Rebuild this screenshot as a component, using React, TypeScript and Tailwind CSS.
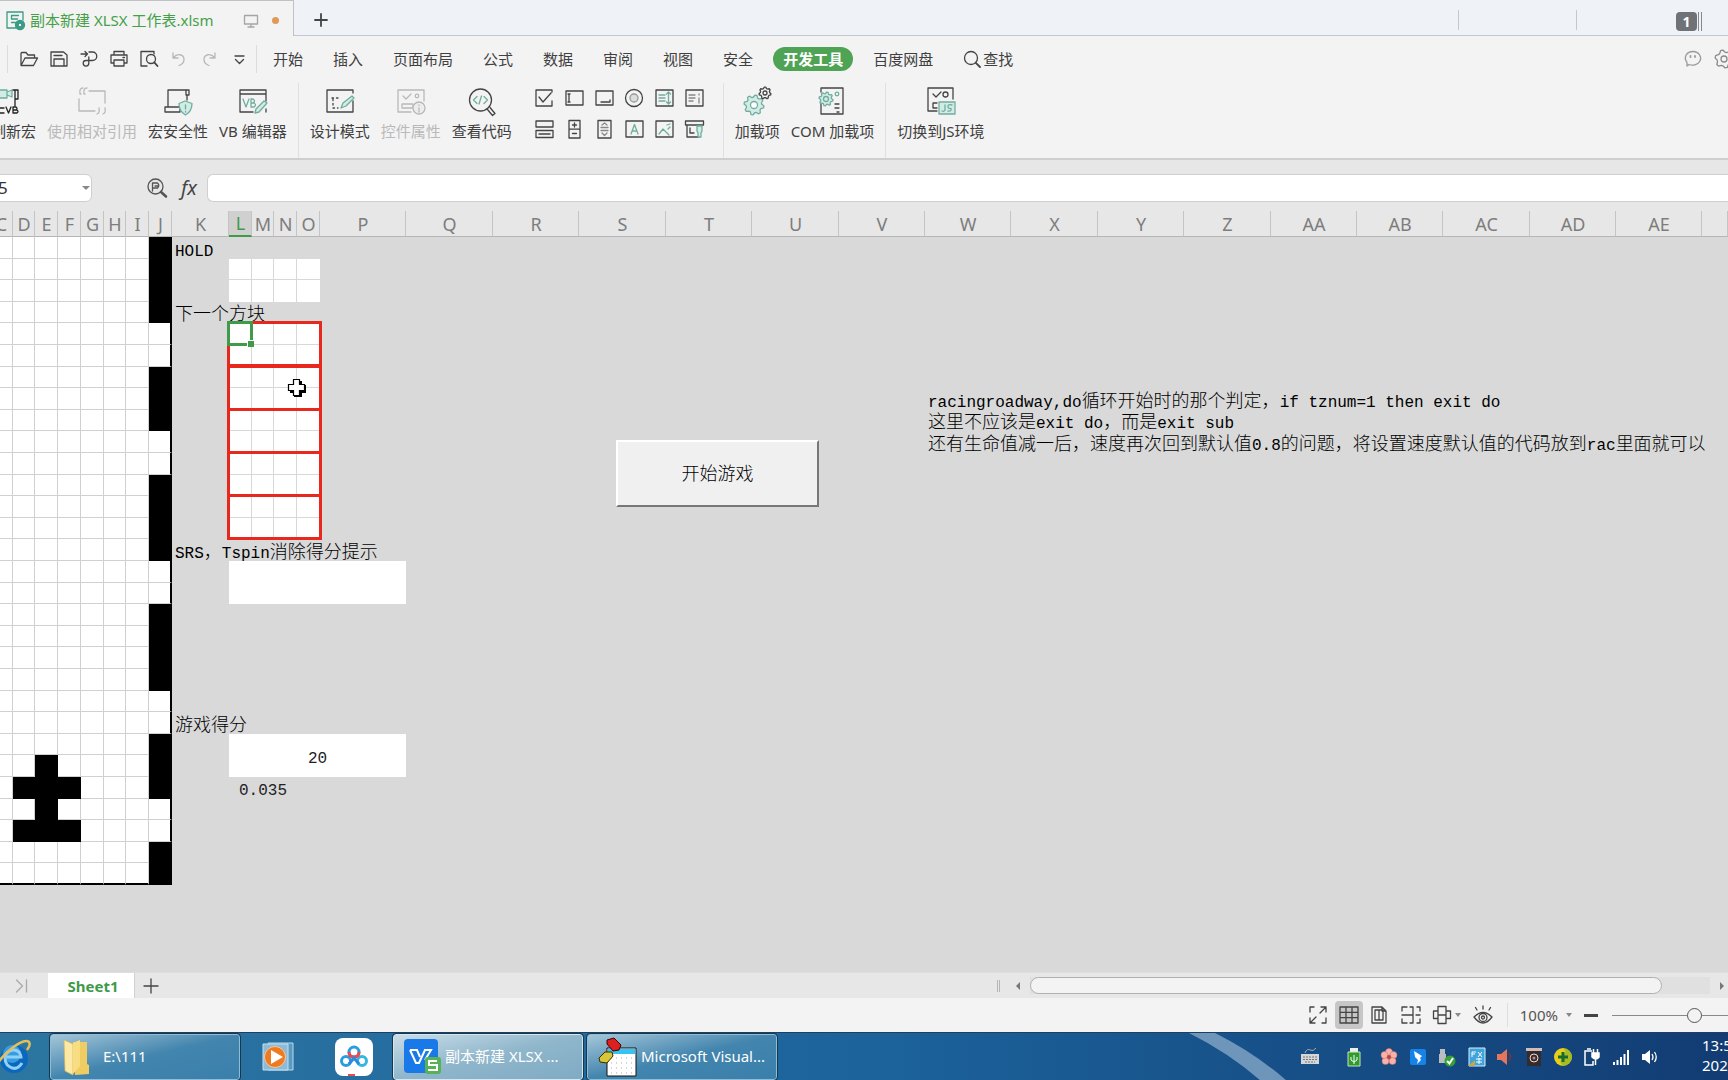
import React, { useState } from 'react';
import clsx from 'clsx';

const DARK = '#444';
const GREEN = '#6fae9f';
const TINT = '#d3ebe5';

interface IconProps {
  w?: number;
  h?: number;
  stroke?: string;
  children: React.ReactNode;
}

function Icon({ w = 18, h = 18, stroke = DARK, children }: IconProps) {
  return (
    <svg
      width={w}
      height={h}
      viewBox={`0 0 ${w} ${h}`}
      fill="none"
      stroke={stroke}
      strokeWidth="1.3"
      strokeLinecap="round"
      strokeLinejoin="round"
      className="shrink-0 overflow-visible"
    >
      {children}
    </svg>
  );
}

function gearPath(cx: number, cy: number, r: number, teeth: number) {
  const pts: string[] = [];
  for (let i = 0; i < teeth * 4; i++) {
    const a = ((i + 0.5) / (teeth * 4)) * Math.PI * 2;
    const rr = i % 4 < 2 ? r : r * 0.78;
    pts.push(`${(cx + Math.cos(a) * rr).toFixed(2)} ${(cy + Math.sin(a) * rr).toFixed(2)}`);
  }
  return `M${pts.join('L')}Z`;
}

/* ---------- title bar ---------- */

function TitleBar() {
  return (
    <div className="flex h-9 shrink-0 items-stretch bg-[#eff3f8]">
      <div className="flex w-[294px] shrink-0 items-center border-t border-r border-[#bfc1c4] bg-[#f3f3f3] pt-1 pl-1.5">
        <Icon w={20} h={20} stroke="#3a9c84">
          <path d="M10 17H1V1h16v8" />
          <path d="M12.500 4.500h-7v3.500h6M5.500 11.500h4" />
          <circle cx="14" cy="14" r="4.500" fill="#3a9c84" />
          <circle cx="14" cy="14" r="1.800" fill="#fff" />
        </Icon>
        <span className="ml-1 text-[15px] whitespace-nowrap text-[#45a049]">副本新建 XLSX 工作表.xlsm</span>
        <div className="mr-3.5 ml-auto flex items-center gap-3.5">
          <Icon w={14} h={14} stroke="#a5a5a5">
            <path d="M0.500 1.500h13v8.500h-13zM7 10v3M4 13h6" />
          </Icon>
          <span className="size-[7px] rounded-full bg-[#e0995a]" />
        </div>
      </div>
      <div className="flex flex-1 items-center border-b border-[#c3c7ce] pt-1 pl-[18px]">
        <button aria-label="新建标签" className="p-0.5">
          <Icon w={14} h={14}>
            <path d="M7 1v12M1 7h12" strokeWidth="1.8" />
          </Icon>
        </button>
        <div className="ml-auto flex items-center">
          <span className="mr-[117px] h-5 w-px bg-[#c4c8ce]" />
          <span className="mr-[99px] h-5 w-px bg-[#c4c8ce]" />
          <span className="mt-1 flex h-[19px] w-[21px] items-center justify-center rounded-sm bg-[#6f7276] text-sm font-bold text-white">
            1
          </span>
          <span className="mt-1 mr-[26px] ml-px h-[19px] w-1 border-x border-[#85888c]" />
        </div>
      </div>
    </div>
  );
}

/* ---------- menu row ---------- */

const MENUS = ['开始', '插入', '页面布局', '公式', '数据', '审阅', '视图', '安全', '开发工具', '百度网盘'];

const QUICK_TOOLS = [
  {
    label: '打开',
    icon: (
      <Icon>
        <path d="M1 15V3.500Q1 2.500 2 2.500h4l2 2.500h6.500v3M1 15.500h12.500L17.500 8H5z" />
      </Icon>
    ),
  },
  {
    label: '保存',
    icon: (
      <Icon>
        <path d="M1 2h12.500L17 5v11H1zM4 16V9h10v7M4 5.500h8" />
      </Icon>
    ),
  },
  {
    label: '输出',
    icon: (
      <Icon>
        <path d="M1 4h6.500M5 1.500L7.500 4 5 6.500M9 2h3.500a4 4 0 0 1 0 8.500H6a2.800 2.800 0 1 0 2.800 2.800V7" />
      </Icon>
    ),
  },
  {
    label: '打印',
    icon: (
      <Icon>
        <path d="M4 5V1.500h10V5M4 13H1V5h16v8h-3M4 10h10v6H4zM13 7.500h1.500" />
      </Icon>
    ),
  },
  {
    label: '打印预览',
    icon: (
      <Icon>
        <path d="M7 16H1V1.500h13V4" />
        <circle cx="11" cy="9" r="4.500" />
        <path d="M14.300 12.300L17.500 16" strokeWidth="1.800" />
      </Icon>
    ),
  },
  {
    label: '撤销',
    icon: (
      <Icon stroke="#b8b8b8">
        <path d="M3 3v5h5M3.500 7.500C7 3 14 4 14 9.500c0 3-2 5-5 6" />
      </Icon>
    ),
  },
  {
    label: '恢复',
    icon: (
      <Icon stroke="#b8b8b8">
        <path d="M15 3v5h-5M14.500 7.500C11 3 4 4 4 9.500c0 3 2 5 5 6" />
      </Icon>
    ),
  },
  {
    label: '更多',
    icon: (
      <Icon>
        <path d="M5 6h9M5.500 9.500l4 4 4-4" />
      </Icon>
    ),
  },
];

function MenuRow() {
  const [active, setActive] = useState('开发工具');

  return (
    <div className="flex h-[46px] shrink-0 items-center overflow-hidden whitespace-nowrap">
      <span className="ml-[7px] h-7 w-px shrink-0 bg-[#dcdcdc]" />
      <div className="ml-3 flex gap-3">
        {QUICK_TOOLS.map(tool => (
          <button key={tool.label} aria-label={tool.label}>
            {tool.icon}
          </button>
        ))}
      </div>
      <span className="ml-2 h-7 w-px shrink-0 bg-[#dcdcdc]" />
      <nav className="ml-1.5 flex gap-2.5">
        {MENUS.map(menu => (
          <button
            key={menu}
            onClick={() => setActive(menu)}
            className={clsx(
              'h-6 rounded-full px-2.5 text-[15px] leading-6',
              active === menu ? 'bg-[#4ea354] font-bold text-white' : 'text-[#404040]'
            )}
          >
            {menu}
          </button>
        ))}
      </nav>
      <button className="ml-5 flex items-center gap-0.5 text-[15px] text-[#404040]">
        <Icon>
          <circle cx="8" cy="8" r="6.500" />
          <path d="M12.800 12.800L17 17" strokeWidth="1.800" />
        </Icon>
        查找
      </button>
      <div className="-mr-1.5 ml-auto flex items-center gap-3">
        <button aria-label="反馈">
          <Icon stroke="#9a9a9a">
            <path d="M3 16v-3.500C-1 7 3 1.500 9 1.500s9 5.500 7 9.500-8 5-11 3.500z" />
            <path d="M6.500 6v1M11 6v1" strokeWidth="1.800" />
          </Icon>
        </button>
        <button aria-label="设置">
          <Icon w={20} h={20} stroke="#8a8a8a">
            <path d={gearPath(10, 10, 9, 6)} />
            <circle cx="10" cy="10" r="3" />
          </Icon>
        </button>
      </div>
    </div>
  );
}

/* ---------- ribbon ---------- */

function RibbonButton({ label, disabled, children }: { label: string; disabled?: boolean; children: React.ReactNode }) {
  return (
    <button
      disabled={disabled}
      className={clsx(
        'flex shrink-0 flex-col items-center gap-1 text-[15px] leading-6',
        disabled ? 'text-[#b9b9b9]' : 'text-[#404040]'
      )}
    >
      {children}
      {label}
    </button>
  );
}

const FORM_CONTROLS = [
  <path key="check" d="M17 12v5H1V1h16v2M4 8l4 5 8-9" />,
  <path key="edit" d="M1 2h17v14H1zM4 5v8M3 5h2M3 13h2" />,
  <path key="button" d="M1 2h17v14H1zM6 13h9v-2" />,
  <g key="radio">
    <circle cx="9" cy="9" r="8.500" />
    <circle cx="9" cy="9" r="4" fill="#d8dedd" stroke="#999" />
  </g>,
  <g key="list">
    <path d="M1 1h17v16H1z" />
    <path d="M4 6h6M4 9h6M4 12h6M13.500 3v12M11.500 5l2-2 2 2M11.500 13l2 2 2-2" stroke={GREEN} />
  </g>,
  <g key="combo">
    <path d="M1 1h17v16H1z" />
    <path d="M4 6h6M4 9h6M4 12h4M14 5v1M14 9v5" stroke="#888" />
  </g>,
  <path key="toggle" d="M1 1h17v6H1zM1 10.500h17v7H1zM4 14h11" />,
  <path key="spin" d="M4 0.500h11v17.500H4zM4 9.200h11M9.500 3v4M7.500 5h4M7.500 13.500h4" />,
  <g key="scroll">
    <path d="M3 0.500h13v17.500H3z" />
    <path d="M7 5l2.500-2L12 5M6 7.500h7M6 10.500h7M7 13l2.500 2.500L12 13" stroke="#888" />
  </g>,
  <g key="label">
    <path d="M1 1h17v16H1z" />
    <path d="M6 14L9.500 4.500 13 14M7 11h5" stroke={GREEN} />
  </g>,
  <g key="image">
    <path d="M1 1h17v16H1z" />
    <path d="M4 14l4-5 6 6M12 5l3-1M13 9l2-2" stroke={GREEN} />
  </g>,
  <g key="more">
    <path d="M0.500 1h18v4h-18zM2 5v12h12M5 8v5h4" />
    <path d="M12 6v5l1 2v4h3v-4l1-2V6z" fill={TINT} stroke={GREEN} />
  </g>,
];

function Separator() {
  return <span className="-mt-1 h-20 w-px shrink-0 bg-[#e0e0e0]" />;
}

function Ribbon() {
  return (
    <div className="h-[78px] shrink-0 overflow-hidden border-b-2 border-[#cfcfcf] pt-[5px]">
      <div className="-ml-6 flex items-start gap-[11px] whitespace-nowrap">
        <RibbonButton label="录制新宏">
          <Icon w={28} h={28}>
            <path d="M0 3h15v8H0zM15 5l5-2v7l-5-2" fill={TINT} stroke={GREEN} />
            <path d="M21 3h5v9h-3V3M23 12v7M0 19v7h12M5 21h7" stroke="#222" />
            <path d="M14 20l2.500 6 2.500-6M21 20v6h4q2-1.500 0-3h-4 3q2-1.500 0-3z" stroke="#222" />
          </Icon>
        </RibbonButton>
        <RibbonButton label="使用相对引用" disabled>
          <Icon w={28} h={28} stroke="#b9b9b9">
            <path d="M11 4h16v12M1 12v12h16M5 1Q1 1 2 7h1M9 1Q5 1 6 7h1M19 27q3-1 2-6M25 27q3-1 2-6" />
          </Icon>
        </RibbonButton>
        <RibbonButton label="宏安全性">
          <Icon w={28} h={28}>
            <path d="M4 20V3h21v5h-3V3M1 20h15v5H1zM23 8v5" />
            <path d="M21 14l7 2.500c0 6-2 9-6.500 11.500C17 25.500 15 22 15 16.500z" fill={TINT} stroke={GREEN} />
            <path d="M21.500 18v4M21.500 24.500v0.500" stroke={GREEN} />
          </Icon>
        </RibbonButton>
        <RibbonButton label="VB 编辑器">
          <Icon w={28} h={28}>
            <path d="M14 25H1V3h26v11M1 7h26M27 22v3" />
            <path d="M4 12l3 8 3-8M12 12v8h3q3-2 0-4h-3 2q3-2 0-4z" stroke={GREEN} />
            <path d="M16 26l1-4 8-8 3 2-8 9z" fill={TINT} stroke={GREEN} />
          </Icon>
        </RibbonButton>
        <Separator />
        <RibbonButton label="设计模式">
          <Icon w={28} h={28}>
            <path d="M27 14v11H1V3h26v3" />
            <path d="M6 11h9M7 12v9h5" strokeDasharray="1.500 3" />
            <path d="M15 21l2-5 9-7 2 2-8 8z" fill={TINT} stroke={GREEN} />
          </Icon>
        </RibbonButton>
        <RibbonButton label="控件属性" disabled>
          <Icon w={28} h={28} stroke="#b9b9b9">
            <path d="M14 25H1V3h26v11M6 9l3 3 5-5M5 17h11v4H5z" />
            <circle cx="20" cy="9" r="1.800" />
            <circle cx="22" cy="21" r="6" fill="#ededed" />
            <path d="M22 18v0.500M22 21v4" />
          </Icon>
        </RibbonButton>
        <RibbonButton label="查看代码">
          <Icon w={28} h={28}>
            <circle cx="12.500" cy="13" r="11" />
            <path d="M19.500 22.500l5 6 2.500-2-5-6" />
            <path d="M9 9.500L5.500 13 9 16.500M16 9.500l3.500 3.500-3.500 3.500M13.500 9l-2.500 8" stroke={GREEN} />
          </Icon>
        </RibbonButton>
        <div className="mt-0.5 mr-2 ml-3 grid grid-cols-6 gap-x-[11px] gap-y-3">
          {FORM_CONTROLS.map((shape, i) => (
            <button key={i} aria-label={`控件 ${i + 1}`}>
              <Icon w={19} h={19}>{shape}</Icon>
            </button>
          ))}
        </div>
        <Separator />
        <RibbonButton label="加载项">
          <Icon w={28} h={28}>
            <path d={gearPath(11, 18, 10, 8)} fill={TINT} stroke={GREEN} />
            <circle cx="11" cy="18" r="3.500" fill="#fff" stroke={GREEN} />
            <path d={gearPath(22, 6, 6, 7)} />
            <circle cx="22" cy="6" r="2" />
          </Icon>
        </RibbonButton>
        <RibbonButton label="COM 加载项">
          <Icon w={28} h={28}>
            <path d="M3 17v10h22V1H3v4M17 17h4M17 21h4M19 25h2" />
            <path d={gearPath(8, 12, 7, 8)} fill={TINT} stroke={GREEN} />
            <circle cx="8" cy="12" r="2.500" stroke={GREEN} />
            <circle cx="19" cy="7" r="1.800" stroke={GREEN} />
          </Icon>
        </RibbonButton>
        <Separator />
        <RibbonButton label="切换到JS环境">
          <Icon w={28} h={28}>
            <path d="M10 24H1V1h25v11M6 7l3 3 5-5M10 16H6v5h4" />
            <circle cx="18.500" cy="7.500" r="2.500" />
            <path d="M12 15h16v12H12z" fill={TINT} stroke={GREEN} />
            <path d="M18 18v5q-1 2-3 1M25 18q-4-1-4 1.500t3 2q1 3-3 2.500" stroke={GREEN} />
          </Icon>
        </RibbonButton>
      </div>
    </div>
  );
}

/* ---------- formula bar ---------- */

function FormulaBar() {
  return (
    <div className="flex h-[51px] shrink-0 items-center overflow-hidden bg-[#e7e7e7] pt-1">
      <div className="relative -ml-5 shrink-0">
        <input
          aria-label="名称框"
          defaultValue="L5"
          className="block h-7 w-[112px] rounded-md border border-[#cfcfcf] bg-white pl-2 text-[17px] text-[#333]"
        />
        <span className="absolute top-3 right-0.5 border-x-[4px] border-t-[4px] border-x-transparent border-t-[#888]" />
      </div>
      <button aria-label="浏览公式" className="ml-[55px]">
        <Icon w={20} h={20} stroke="#555">
          <circle cx="8.500" cy="8.500" r="7.500" />
          <path d="M5.500 13V5h5q2.500 2.500 0 5h-5M8 8h3" />
          <path d="M14 14l5 4.500" strokeWidth="2.600" />
        </Icon>
      </button>
      <button className="ml-3 w-5 text-xl leading-6 text-[#444] italic">fx</button>
      <input
        aria-label="编辑栏"
        className="ml-2 h-7 min-w-0 flex-1 rounded-l-md border border-r-0 border-[#cfcfcf] bg-white px-2"
      />
    </div>
  );
}

/* ---------- sheet ---------- */

// the last column takes whatever is left of the window
const COLUMNS: { name: string; width?: number }[] = [
  { name: 'C', width: 13 },
  { name: 'D', width: 22 },
  { name: 'E', width: 23 },
  { name: 'F', width: 23 },
  { name: 'G', width: 23 },
  { name: 'H', width: 22 },
  { name: 'I', width: 23 },
  { name: 'J', width: 23 },
  { name: 'K', width: 57 },
  { name: 'L', width: 23 },
  { name: 'M', width: 22 },
  { name: 'N', width: 23 },
  { name: 'O', width: 23 },
  { name: 'P', width: 86 },
  { name: 'Q', width: 87 },
  { name: 'R', width: 86 },
  { name: 'S', width: 87 },
  { name: 'T', width: 86 },
  { name: 'U', width: 87 },
  { name: 'V', width: 86 },
  { name: 'W', width: 86 },
  { name: 'X', width: 87 },
  { name: 'Y', width: 86 },
  { name: 'Z', width: 87 },
  { name: 'AA', width: 86 },
  { name: 'AB', width: 86 },
  { name: 'AC', width: 87 },
  { name: 'AD', width: 86 },
  { name: 'AE', width: 86 },
  { name: '' },
];

const ROW_HEIGHTS = [22, 21, 22, 21, 22];
const ROW_COUNT = 34;
const BOARD_ROWS = 30;

const TEXTS: Record<string, string> = {
  K1: 'HOLD',
  K4: '下一个方块',
  K15: 'SRS，Tspin消除得分提示',
  K23: '游戏得分',
  L24: '20',
  L26: '0.035',
  W8: 'racingroadway,do循环开始时的那个判定，if tznum=1 then exit do',
  W9: '这里不应该是exit do，而是exit sub',
  W10: '还有生命值减一后，速度再次回到默认值0.8的问题，将设置速度默认值的代码放到rac里面就可以',
};

const MERGES: Record<string, { cols: number; rows: number; fill: boolean }> = {
  L16: { cols: 5, rows: 2, fill: true },
  L24: { cols: 5, rows: 2, fill: true },
  L26: { cols: 3, rows: 1, fill: false },
};

const WALL_ROWS = [1, 2, 3, 4, 7, 8, 9, 12, 13, 14, 15, 18, 19, 20, 21, 24, 25, 26, 29, 30];
const CAR = ['E25', 'D26', 'E26', 'F26', 'E27', 'D28', 'E28', 'F28'];

function isCovered(col: number, row: number) {
  return Object.entries(MERGES).some(([key, m]) => {
    const c = COLUMNS.findIndex(x => x.name === key[0]);
    const r = parseInt(key.slice(1));
    return col >= c && col < c + m.cols && row >= r && row < r + m.rows && !(col === c && row === r);
  });
}

function cellClass(name: string, col: number, row: number) {
  const key = name + row;
  if (col <= 7 && row <= BOARD_ROWS) {
    const black = (name === 'J' && WALL_ROWS.includes(row)) || CAR.includes(key);
    return clsx(
      black ? 'border-black bg-black' : 'border-[#d0d0d0] bg-white',
      name === 'J' ? 'border-r-2 border-r-black' : 'border-r',
      row === BOARD_ROWS ? 'border-b-2 border-b-black' : 'border-b'
    );
  }
  if (col >= 9 && col <= 12) {
    if (row === 2 || row === 3) {
      return clsx('border-[#d8d8d8] bg-white', name !== 'O' && 'border-r', row === 2 && 'border-b');
    }
    if (row >= 5 && row <= 14) return 'border-r border-b border-[#d8d8d8] bg-white';
  }
  return '';
}

// latin runs of the cell font are narrower than the ideographs
function CellText({ text }: { text: string }) {
  return (
    <>
      {text.split(/([\x20-\x7e]+)/).map((part, i) =>
        i % 2 === 1 ? (
          <span key={i} className="text-base leading-none font-normal">
            {part}
          </span>
        ) : (
          part
        )
      )}
    </>
  );
}

function Sheet() {
  return (
    <div className="relative min-h-0 flex-1 overflow-hidden bg-[#d9d9d9]">
      <table className="w-full table-fixed border-separate border-spacing-0">
        <colgroup>
          {COLUMNS.map(c => (
            <col key={c.name} style={{ width: c.width }} />
          ))}
        </colgroup>
        <thead>
          <tr className="h-[26px]">
            {COLUMNS.map(c => (
              <th
                key={c.name}
                className={clsx(
                  'border-r border-r-[#c4c4c4] p-0 text-center text-lg leading-6 font-normal',
                  c.name === 'L'
                    ? 'border-b-2 border-b-[#3f9a4a] bg-[#d0d0d0] text-[#3f9a4a]'
                    : 'border-b border-b-[#b5b5b5] bg-[#e7e7e7] text-[#7d7d7d]'
                )}
              >
                <span className={clsx('flex justify-center pl-px', c.name === 'C' && '-ml-2.5')}>{c.name}</span>
              </th>
            ))}
          </tr>
        </thead>
        <tbody className="font-['Liberation_Mono','Noto_Sans_CJK_SC',monospace] text-lg leading-6 font-light text-black">
          {Array.from({ length: ROW_COUNT }, (_, i) => i + 1).map(row => (
            <tr key={row} style={{ height: ROW_HEIGHTS[(row - 1) % 5] }}>
              {COLUMNS.map((c, col) => {
                if (isCovered(col, row)) return null;
                const key = c.name + row;
                const merge = MERGES[key];
                return (
                  <td
                    key={key}
                    colSpan={merge?.cols}
                    rowSpan={merge?.rows}
                    className={clsx(
                      'relative p-0 whitespace-nowrap',
                      merge ? 'text-center align-middle text-[#222]' : 'align-bottom',
                      merge?.fill && 'bg-white',
                      cellClass(c.name, col, row)
                    )}
                  >
                    {TEXTS[key] && (
                      <div className={clsx('h-5', !merge && 'pl-[3px]')}>
                        <CellText text={TEXTS[key]} />
                      </div>
                    )}
                    {c.name === 'L' && row >= 5 && row <= 13 && row % 2 === 1 && (
                      <span className="absolute -top-0.5 -left-0.5 z-10 h-[46px] w-[95px] border-[3px] border-[#e8281c]" />
                    )}
                    {key === 'L5' && (
                      <span className="absolute -top-0.5 -left-0.5 z-20 h-[25px] w-[26px] border-[3px] border-[#3f9a4a]">
                        <span className="absolute -right-1 -bottom-1 size-[7px] border-t border-l border-white bg-[#3f9a4a]" />
                      </span>
                    )}
                  </td>
                );
              })}
            </tr>
          ))}
        </tbody>
      </table>

      {/* form button floating over the cells */}
      <button className="absolute top-[229px] left-[616px] h-[67px] w-[203px] border-2 border-t-white border-r-[#777] border-b-[#777] border-l-white bg-[#f0f0f0] pb-0.5 text-lg font-light text-black">
        开始游戏
      </button>

      <svg className="absolute top-[167px] left-[287px] z-30" width="20" height="20" viewBox="0 0 20 20">
        <path d="M8 3h7v4h4v8h-4v4H7v-4H3V8h4z" fill="#000" />
        <path d="M6.500 1.500h6v5h5v6h-5v5h-6v-5h-5v-6h5z" fill="#fff" stroke="#000" strokeWidth="1.200" />
      </svg>
    </div>
  );
}

/* ---------- sheet tabs and status bar ---------- */

function SheetTabs() {
  return (
    <div className="flex h-[26px] shrink-0 items-stretch border-t border-[#dedede] bg-[#e7e7e7]">
      <button aria-label="最后一个工作表" className="ml-4 w-3">
        <Icon w={12} h={14} stroke="#aaa">
          <path d="M0.500 1l6 6-6 6M10.500 1v12" />
        </Icon>
      </button>
      <button className="ml-5 w-[87px] border-r border-[#d0d0d0] bg-white pl-1 text-[15px] leading-6 font-bold text-[#3f9a4a]">
        Sheet1
      </button>
      <button aria-label="新建工作表" className="ml-2 flex items-center">
        <Icon w={16} h={16}>
          <path d="M8 1v14M1 8h14" />
        </Icon>
      </button>
      <div className="ml-auto flex w-[42.3%] items-center">
        <span className="h-3 w-[3px] shrink-0 border-x border-[#b5b5b5]" />
        <span className="ml-4 shrink-0 border-y-[4px] border-r-[4px] border-y-transparent border-r-[#777]" />
        <div className="mx-2.5 flex-1 bg-[#e0e0e0]">
          <div className="h-[17px] w-[93%] rounded-full border border-[#b0b0b0] bg-[#f3f3f3]" />
        </div>
        <span className="mr-1 shrink-0 border-y-[4px] border-l-[4px] border-y-transparent border-l-[#777]" />
      </div>
    </div>
  );
}

function Caret() {
  return <span className="border-x-[3px] border-t-[4px] border-x-transparent border-t-[#888]" />;
}

function StatusBar() {
  const [zoom, setZoom] = useState(100);

  return (
    <div className="flex h-[34px] shrink-0 items-center justify-end overflow-hidden bg-[#f3f3f3]">
      <button aria-label="全屏" className="mr-2">
        <Icon>
          <path d="M1 6V1h4M12 1h5v5M17 12v5h-4M6 17H1v-5M17 1l-6 6M1 17l6-6" />
        </Icon>
      </button>
      <button aria-label="普通视图" className="mr-2 flex h-7 w-7 items-center justify-center rounded-sm bg-[#c6c6c6]">
        <Icon w={20} h={18}>
          <path d="M1 1h18v16H1zM1 6.300h18M1 11.600h18M7 1v16M13 1v16" />
        </Icon>
      </button>
      <button aria-label="页面布局视图" className="mr-3.5">
        <Icon w={16}>
          <path d="M11 1H1v16h14V5zM11 1v4h4M4 4h4v10H4zM8 4h4v10H8z" />
        </Icon>
      </button>
      <button aria-label="分页预览" className="mr-3">
        <Icon w={20}>
          <path d="M1 5V1h5M9 1h3v16H9M1 9h11M1 13v4h5M15 9h4M16 1h3v4M19 13v4h-3" />
        </Icon>
      </button>
      <button aria-label="阅读模式" className="mr-3 flex items-center gap-1">
        <Icon>
          <path d="M5 0.500h8v17H5zM5 5H0.500v7.500H5M13 5h4.500v7.500H13M5 9h8" />
        </Icon>
        <Caret />
      </button>
      <button aria-label="护眼模式" className="mr-3.5">
        <Icon w={20}>
          <path d="M1 11q9-9 18 0-9 12-18 0zM10 3V0M4 4L2.500 1.500M16 4l1.500-2.500" />
          <circle cx="10" cy="11.500" r="4" />
          <circle cx="10" cy="11.500" r="1.500" />
        </Icon>
      </button>
      <span className="h-6 w-px bg-[#dedede]" />
      <button className="ml-3 flex items-center gap-2 text-[15px] text-[#555]">
        {zoom}%
        <Caret />
      </button>
      <button aria-label="缩小" onClick={() => setZoom(zoom - 10)} className="mr-3.5 ml-3 h-[3px] w-3.5 bg-[#444]" />
      <input
        type="range"
        aria-label="缩放"
        min={10}
        max={190}
        value={zoom}
        onChange={e => setZoom(Number(e.target.value))}
        className="-mr-12 h-4 w-[164px] shrink-0 appearance-none bg-transparent [&::-webkit-slider-runnable-track]:h-px [&::-webkit-slider-runnable-track]:bg-[#888] [&::-webkit-slider-thumb]:-mt-[7px] [&::-webkit-slider-thumb]:size-[15px] [&::-webkit-slider-thumb]:appearance-none [&::-webkit-slider-thumb]:rounded-full [&::-webkit-slider-thumb]:border [&::-webkit-slider-thumb]:border-[#555] [&::-webkit-slider-thumb]:bg-[#f3f3f3]"
      />
    </div>
  );
}

/* ---------- taskbar ---------- */

function TaskButton({ label, bright, children }: { label: string; bright?: boolean; children: React.ReactNode }) {
  return (
    <button
      className={clsx(
        'flex h-[46px] w-[190px] shrink-0 items-center gap-1 rounded-[3px] border pl-2.5 text-[15px] text-white outline outline-[#16384f]',
        bright
          ? 'border-[#d4e6ee] bg-linear-to-br from-[#c9dde7] via-[#8fb6cb] to-[#7fabc4]'
          : 'border-[#8fbdd6] bg-linear-to-br from-[#a3c6d8] via-[#4285ae] to-[#3a80ac]'
      )}
    >
      {children}
      {label}
    </button>
  );
}

const TRAY = [
  <g key="usb">
    <path d="M4 0h8v4H4z" fill="#eee" />
    <path d="M2 4h12v14H2z" fill="#2f9a2d" stroke="#c8e6b8" />
    <path d="M8 7v9M5 9v3l3 2 3-2V9" stroke="#fff" fill="none" />
  </g>,
  <g key="flower" fill="#f6b3ac" stroke="#d2685e" strokeWidth="0.500">
    <circle cx="8" cy="4" r="3.500" />
    <circle cx="12.500" cy="7" r="3.500" />
    <circle cx="11.500" cy="13" r="3.500" />
    <circle cx="4.500" cy="13" r="3.500" />
    <circle cx="3.500" cy="7" r="3.500" />
    <circle cx="8" cy="9" r="2" fill="#b9433e" />
  </g>,
  <g key="bird">
    <rect x="0" y="1" width="16" height="16" rx="2" fill="#1683e8" />
    <path d="M4 3l8 5-2 2 1 2-4 4 1-4-3-3z" fill="#fff" />
  </g>,
  <g key="eject">
    <path d="M1 1h5v5H1zM0 6h7v9H0z" fill="#b9bec2" />
    <circle cx="11" cy="13" r="5.500" fill="#35a135" />
    <path d="M8 13l2.500 2.500L14 10" stroke="#fff" strokeWidth="2" fill="none" />
  </g>,
  <g key="input">
    <path d="M1 0h16v18H1z" fill="#3fa3dc" stroke="#d7eef9" />
    <path d="M4 4h4M4 4v5M4 6h3M10 4l4 5M14 4l-4 5M8 11h6M11 10v6M8 14h6" stroke="#fff" fill="none" />
    <path d="M0 18l7-6v6z" fill="#c8a64b" />
  </g>,
  <g key="sound">
    <path d="M0 6h4l6-5v16l-6-5H0z" fill="#e5765b" />
    <path d="M12 5q3 4 0 8" stroke="#84332a" strokeWidth="1.500" fill="none" />
  </g>,
  <g key="recorder">
    <path d="M1 1h14v17H1z" fill="#342b2a" />
    <path d="M0 0h16v3H0z" fill="#d3bcb6" />
    <circle cx="8" cy="10" r="4" fill="none" stroke="#e8ddd9" />
    <circle cx="8" cy="10" r="1.500" fill="#b88" />
  </g>,
  <g key="shield">
    <circle cx="8" cy="9" r="9" fill="#e9cf1b" />
    <path d="M8 0a9 9 0 0 1 0 18q-5-4 0-9t0-9" fill="#79ad2c" opacity="0.600" />
    <path d="M8 4v10M3 9h10" stroke="#176b2b" strokeWidth="3" />
  </g>,
  <g key="power" stroke="#fff" fill="none" strokeWidth="1.500">
    <path d="M8 3H1v14h8v-4M3 1h4" />
    <path d="M8 5h7v4q-3 4-7 0zM9.500 1v4M13.500 1v4M11.500 11v6" fill="#fff" />
  </g>,
  <g key="signal" fill="#fff">
    <path d="M0 14h2v3H0zM3.500 12h2v5h-2zM7 9h2v8H7zM10.500 6h2v11h-2zM14 2h2v15h-2z" />
  </g>,
  <g key="volume">
    <path d="M0 6h3l5-4v14l-5-4H0z" fill="#fff" />
    <path d="M10 6q2 3 0 6M12.500 4q3.500 5 0 10" stroke="#fff" strokeWidth="1.300" fill="none" />
  </g>,
];

function Taskbar() {
  return (
    <div className="relative flex h-12 shrink-0 items-center overflow-hidden border-t border-[#1f3f5e] bg-linear-to-r from-[#2c76a1] via-[#1c639c] via-50% to-[#123c73] text-white">
      <svg className="absolute top-0 left-[68%]" width="120" height="48" viewBox="0 0 120 48">
        <path d="M14 0h26q40 20 72 48H86Q54 20 14 0z" fill="#a9c3da" opacity="0.600" />
      </svg>
      <svg className="-ml-3 shrink-0" width="44" height="44" viewBox="0 0 44 44">
        <circle cx="26" cy="24" r="14" fill="#0b67bd" />
        <circle cx="24" cy="19" r="9" fill="#4cb4ef" opacity="0.700" />
        <path d="M34 28q-5 8-12 4t-4-13q6-7 13-2 2 3 2 5H19" fill="none" stroke="#8fd0f5" strokeWidth="3" />
        <path d="M6 40C2 30 34 0 41 7q2 3-2 8" fill="none" stroke="#e3bf5a" strokeWidth="2.500" />
      </svg>
      <div className="ml-[18px]">
        <TaskButton label="E:\111">
          <svg className="mr-1" width="34" height="38" viewBox="0 0 34 38">
            <path d="M12 4h14v22l2 1v9l-14 1z" fill="#f0cd62" />
            <path d="M3 2l9 4v31l-8-4z" fill="#fbe9a5" stroke="#d9b654" strokeWidth="0.700" />
            <path d="M12 5l7-3v26l-7 8z" fill="#f8dd83" />
          </svg>
        </TaskButton>
      </div>
      <button aria-label="媒体播放器" className="ml-[22px] shrink-0">
        <svg width="32" height="32" viewBox="0 0 32 32">
          <path d="M6 2h25v27H6z" fill="#5b9ac0" stroke="#b9d9ea" />
          <path d="M1 3h25v26H1z" fill="#8cbbd8" stroke="#c6dfec" />
          <circle cx="13" cy="16" r="10.500" fill="#ee7b21" stroke="#f7c79b" />
          <path d="M9 9l12 7-12 7z" fill="#fff" />
        </svg>
      </button>
      <button aria-label="百度网盘" className="ml-[41px] shrink-0">
        <svg width="38" height="38" viewBox="0 0 38 38">
          <rect width="38" height="38" rx="8" fill="#fff" />
          <circle cx="11" cy="23" r="4.500" fill="none" stroke="#2a9de0" strokeWidth="3" />
          <circle cx="27" cy="23" r="4.500" fill="none" stroke="#35b6e0" strokeWidth="3" />
          <circle cx="19" cy="14" r="5" fill="none" stroke="#2a9de0" strokeWidth="3" />
          <path d="M14 14q0 5 5 5t5-5" fill="none" stroke="#ea4b50" strokeWidth="3" />
          <path d="M14 26l5-6 5 6" fill="none" stroke="#2a8be0" strokeWidth="3" />
          <path d="M13 36h7v2h-7z" fill="#ea4b50" />
        </svg>
      </button>
      <div className="ml-5 flex gap-1">
        <TaskButton label="副本新建 XLSX ..." bright>
          <svg width="37" height="36" viewBox="0 0 37 36">
            <rect width="34" height="34" rx="4" fill="#1a79e8" />
            <path d="M6 11l6 13h3l6-13M6 11h7l3 7M20 11h7l-6 10" fill="none" stroke="#fff" strokeWidth="2" />
            <rect x="21" y="18" width="16" height="17" rx="3" fill="#56b254" />
            <path d="M33 22h-8v4h8v5h-9" fill="none" stroke="#fff" strokeWidth="2" />
          </svg>
        </TaskButton>
        <TaskButton label="Microsoft Visual...">
          <svg width="39" height="40" viewBox="0 0 39 40">
            <path d="M9 11h29v28H9z" fill="#fff" stroke="#111" />
            <path d="M10 12h27v5H10z" fill="#35c4f2" />
            <path d="M13 21h23M13 26h23M13 31h23M13 36h23" stroke="#aaa" strokeDasharray="1 4" />
            <path d="M9 3l7-2 7 7-2 5-6 1-6-7z" fill="#dc201f" stroke="#400" />
            <path d="M1 21l6-6h7l1 4-6 7-7-1z" fill="#d8c637" stroke="#332c00" />
          </svg>
        </TaskButton>
      </div>
      <div className="ml-auto flex shrink-0 items-center">
        <svg className="mr-[27px]" width="18" height="18" viewBox="0 0 18 18">
          <path d="M0 6h18v10H0z" fill="#d5d7d8" />
          <path d="M2 9h14M2 11.500h14M4 14h10" stroke="#777" strokeDasharray="2 1" />
          <path d="M4 5q2-5 5-3t6-2" stroke="#aaa" fill="none" />
        </svg>
        <div className="flex gap-[11px]">
          {TRAY.map(shape => (
            <svg
              key={shape.key}
              width="18"
              height="18"
              viewBox="0 0 18 18"
              className="overflow-visible first:mr-1.5"
            >
              {shape}
            </svg>
          ))}
        </div>
        <div className="ml-[42px] w-[26px] overflow-hidden pb-1 text-[15px] leading-5">
          <div>13:5</div>
          <div>202</div>
        </div>
      </div>
    </div>
  );
}

export default function App() {
  return (
    <div className="flex h-screen flex-col overflow-hidden bg-[#f3f3f3] font-['Noto_Sans','Noto_Sans_CJK_SC',sans-serif]">
      <TitleBar />
      <MenuRow />
      <Ribbon />
      <FormulaBar />
      <Sheet />
      <SheetTabs />
      <StatusBar />
      <Taskbar />
    </div>
  );
}
